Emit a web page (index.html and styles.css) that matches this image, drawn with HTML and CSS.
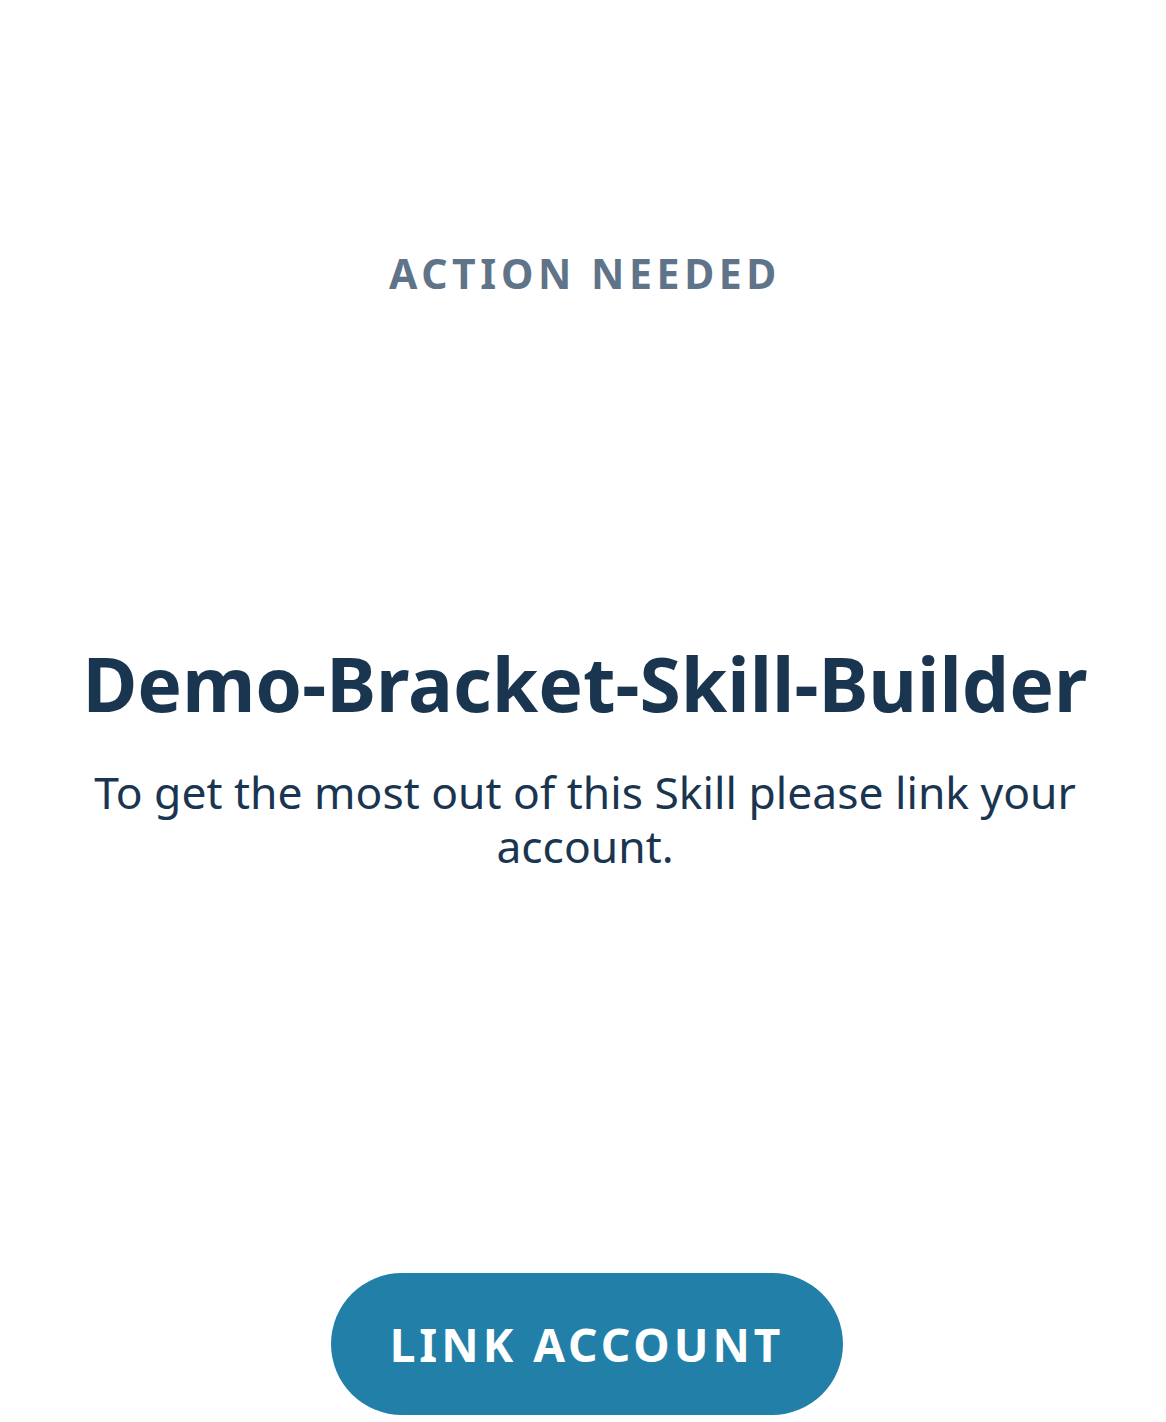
FILE: index.html
```html
<!DOCTYPE html>
<html>
<head>
<meta charset="utf-8">
<link rel="stylesheet" href="styles.css">
</head>
<body>
<main class="screen">
  <div class="label">ACTION NEEDED</div>
  <h1 class="title">Demo-Bracket-Skill-Builder</h1>
  <p class="message">To get the most out of this Skill please link your account.</p>
  <div class="actions">
    <button class="link-btn">LINK ACCOUNT</button>
  </div>
</main>
</body>
</html>
```
FILE: styles.css
```css
html, body {
  margin: 0;
  padding: 0;
  background: #ffffff;
}
.screen {
  width: 1166px;
  height: 1422px;
  box-sizing: border-box;
  display: flex;
  flex-direction: column;
  align-items: center;
  font-family: "Noto Sans", "Open Sans", sans-serif;
  text-align: center;
  padding-top: 248px;
  padding-left: 4px;
}
.label {
  font-size: 41px;
  font-weight: 700;
  letter-spacing: 4.6px;
  color: #5f7488;
  line-height: 50px;
}
.title {
  margin: 340px 0 0 0;
  font-size: 75px;
  font-weight: 700;
  color: #1a3550;
  line-height: 90px;
}
.message {
  margin: 37px 0 0 0;
  width: 1000px;
  font-size: 44.4px;
  color: #1a3550;
  line-height: 54px;
}
.actions {
  margin-top: auto;
  padding-bottom: 7px;
  padding-left: 4px;
}
.link-btn {
  width: 512px;
  height: 142px;
  border: none;
  border-radius: 71px;
  background: #2280a8;
  color: #ffffff;
  font-family: inherit;
  font-size: 46px;
  font-weight: 700;
  letter-spacing: 4px;
}
```
